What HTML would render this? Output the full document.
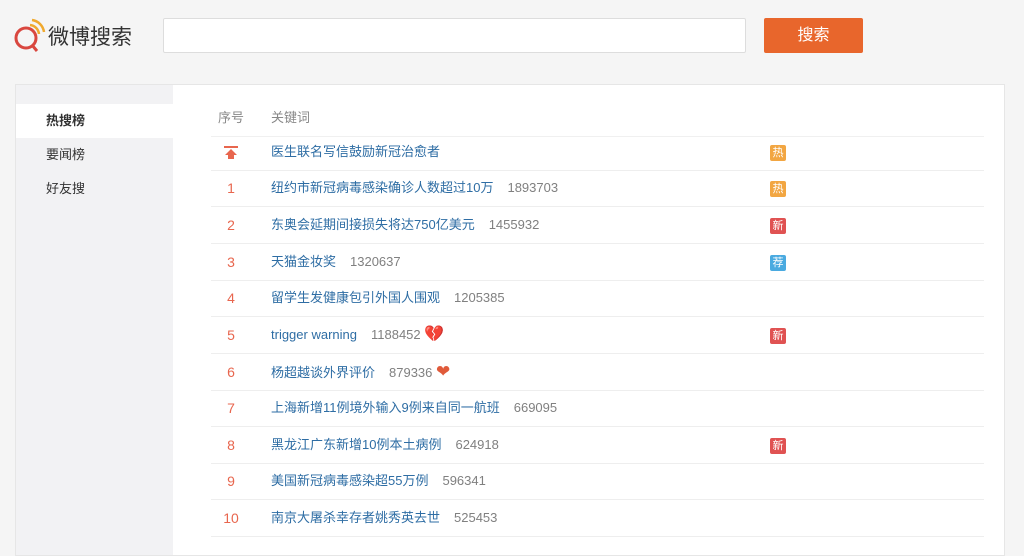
<!DOCTYPE html><html><head><meta charset="utf-8"><style>
body{margin:0;width:1024px;height:541px;overflow:hidden;background:#f5f5f5;font-family:"Liberation Sans","Noto Sans CJK SC",sans-serif;position:relative}
.logo{position:absolute;left:13px;top:16px;width:130px;height:40px}
.logo span{position:absolute;left:35px;top:5px;font-size:21px;color:#333;white-space:nowrap;letter-spacing:0px}
.inp{position:absolute;left:163px;top:18px;width:581px;height:33px;background:#fff;border:1px solid #ddd;border-radius:2px}
.btn{position:absolute;left:764px;top:18px;width:99px;height:35px;background:#e8662c;color:#fff;font-size:16px;text-align:center;line-height:35px;border-radius:2px}
.panel{position:absolute;left:15px;top:84px;width:988px;height:470px;background:#fff;border:1px solid #e6e6e6}
.side{position:absolute;left:0;top:0;width:157px;height:100%;background:#f2f2f4}
.side div{height:34px;line-height:34px;padding-left:30px;font-size:13px;color:#333}
.side .a{background:#fff;font-weight:bold;margin-top:19px}
.row{position:absolute;left:211px;width:773px;height:36px;border-bottom:1px solid #eee;font-size:13px;line-height:36px}
.n{position:absolute;left:0;width:40px;text-align:center;color:#e8664e;font-size:14px}
.k{position:absolute;left:60px;color:#2e6da4;white-space:nowrap}
.k i{font-style:normal;color:#808080;margin-left:14px}
.b{position:absolute;left:559px;top:11px;width:16px;height:16px;line-height:16px;text-align:center;color:#fff;font-size:11px;border-radius:2px}
.h{background:#f2a642}.x{background:#e05252}.j{background:#4aaae0}
</style></head><body>
<div class="logo"><svg width="34" height="38" viewBox="0 0 34 38"><circle cx="13" cy="22" r="10" fill="none" stroke="#d9473f" stroke-width="3"/><path d="M19 29 L24 35" stroke="#d9473f" stroke-width="3"/><path d="M17 9 A10 10 0 0 1 26 18" fill="none" stroke="#f0a92e" stroke-width="2.5"/><path d="M19 4 A14 14 0 0 1 31 16" fill="none" stroke="#f0a92e" stroke-width="2.5"/></svg><span>微博搜索</span></div>
<div class="inp"></div><div class="btn">搜索</div>
<div class="panel"><div class="side"><div class="a">热搜榜</div><div>要闻榜</div><div>好友搜</div></div></div>
<div class="row" style="top:100px;color:#888;border-bottom:1px solid #f0f0f0"><span class="n" style="color:#888;font-size:13px">序号</span><span class="k" style="color:#888">关键词</span></div>
<div class="row" style="top:134px"><span class="n"><svg width="14" height="14" viewBox="0 0 14 14" style="vertical-align:middle"><rect x="0" y="0" width="14" height="2" fill="#e8664e"/><path d="M7 3 L13 9 H10 V13 H4 V9 H1Z" fill="#e8664e"/></svg></span><span class="k">医生联名写信鼓励新冠治愈者</span><span class="b h">热</span></div>
<div class="row" style="top:170px"><span class="n">1</span><span class="k">纽约市新冠病毒感染确诊人数超过10万<i>1893703</i></span><span class="b h">热</span></div>
<div class="row" style="top:207px"><span class="n">2</span><span class="k">东奥会延期间接损失将达750亿美元<i>1455932</i></span><span class="b x">新</span></div>
<div class="row" style="top:244px"><span class="n">3</span><span class="k">天猫金妆奖<i>1320637</i></span><span class="b j">荐</span></div>
<div class="row" style="top:280px"><span class="n">4</span><span class="k">留学生发健康包引外国人围观<i>1205385</i></span></div>
<div class="row" style="top:317px"><span class="n">5</span><span class="k">trigger warning<i>1188452</i> <span style="color:#d9473f;font-size:16px">💔</span></span><span class="b x">新</span></div>
<div class="row" style="top:354px"><span class="n">6</span><span class="k">杨超越谈外界评价<i>879336</i> <span style="color:#e05a3a;font-size:17px">❤</span></span></div>
<div class="row" style="top:390px"><span class="n">7</span><span class="k">上海新增11例境外输入9例来自同一航班<i>669095</i></span></div>
<div class="row" style="top:427px"><span class="n">8</span><span class="k">黑龙江广东新增10例本土病例<i>624918</i></span><span class="b x">新</span></div>
<div class="row" style="top:463px"><span class="n">9</span><span class="k">美国新冠病毒感染超55万例<i>596341</i></span></div>
<div class="row" style="top:500px"><span class="n">10</span><span class="k">南京大屠杀幸存者姚秀英去世<i>525453</i></span></div>
</body></html>
